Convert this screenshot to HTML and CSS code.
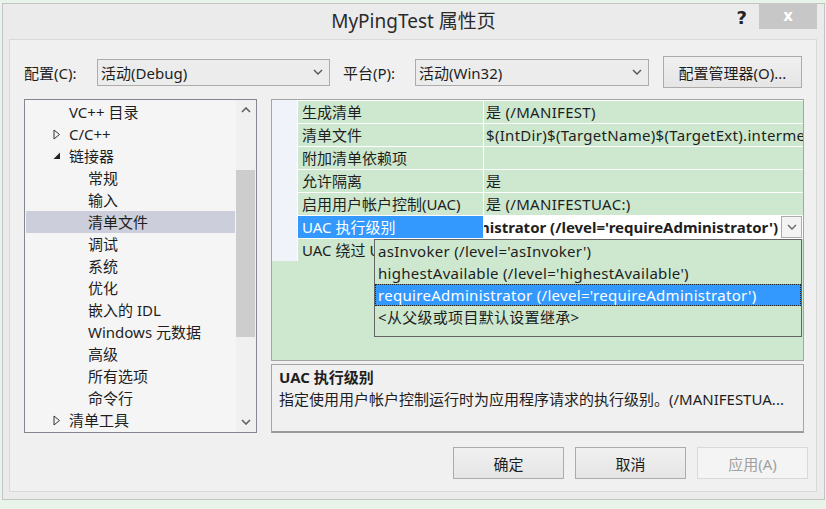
FILE: index.html
```html
<!DOCTYPE html>
<html>
<head>
    <meta charset="utf-8">
    <link rel="stylesheet" href="styles.css">
</head>
<body>
    <div class="window">
        <div class="titlebar">
            <div></div>
            <div class="caption">MyPingTest 属性页</div>
            <div class="caption-buttons">
                <span class="help">?</span>
                <span class="close">x</span>
            </div>
        </div>

        <div class="client">
            <div class="config-row">
                <span class="field-label">配置(C):</span>
                <div class="combo combo-config">
                    <span>活动(Debug)</span>
                    <svg class="chev" width="10" height="6" viewBox="0 0 10 6"><polyline points="1,1 5,5 9,1" fill="none" stroke="#555" stroke-width="1.4"/></svg>
                </div>
                <span class="field-label platform-label">平台(P):</span>
                <div class="combo combo-platform">
                    <span>活动(Win32)</span>
                    <svg class="chev" width="10" height="6" viewBox="0 0 10 6"><polyline points="1,1 5,5 9,1" fill="none" stroke="#555" stroke-width="1.4"/></svg>
                </div>
                <button class="btn btn-manager">配置管理器(O)...</button>
            </div>

            <div class="main">
                <div class="tree">
                    <ul class="tree-list">
                        <li class="node lvl1"><span class="twisty"></span>VC++ 目录</li>
                        <li class="node lvl1"><span class="twisty"><svg width="8" height="11" viewBox="0 0 8 11"><polygon points="1,1 6.5,5.5 1,10" fill="none" stroke="#333" stroke-width="1"/></svg></span>C/C++</li>
                        <li class="node lvl1"><span class="twisty"><svg width="8" height="8" viewBox="0 0 8 8"><polygon points="7,0.5 7,7 0.5,7" fill="#222"/></svg></span>链接器</li>
                        <li class="node lvl2">常规</li>
                        <li class="node lvl2">输入</li>
                        <li class="node lvl2 selected">清单文件</li>
                        <li class="node lvl2">调试</li>
                        <li class="node lvl2">系统</li>
                        <li class="node lvl2">优化</li>
                        <li class="node lvl2">嵌入的 IDL</li>
                        <li class="node lvl2">Windows 元数据</li>
                        <li class="node lvl2">高级</li>
                        <li class="node lvl2">所有选项</li>
                        <li class="node lvl2">命令行</li>
                        <li class="node lvl1"><span class="twisty"><svg width="8" height="11" viewBox="0 0 8 11"><polygon points="1,1 6.5,5.5 1,10" fill="none" stroke="#333" stroke-width="1"/></svg></span>清单工具</li>
                    </ul>
                    <div class="vscroll">
                        <div class="arrow">
                            <svg width="10" height="6" viewBox="0 0 10 6"><polyline points="1,5 5,1 9,5" fill="none" stroke="#606060" stroke-width="1.6"/></svg>
                        </div>
                        <div class="track"><div class="thumb"></div></div>
                        <div class="arrow">
                            <svg width="10" height="6" viewBox="0 0 10 6"><polyline points="1,1 5,5 9,1" fill="none" stroke="#606060" stroke-width="1.6"/></svg>
                        </div>
                    </div>
                </div>

                <div class="props">
                    <div class="grid">
                        <div class="gutter"></div>
                        <div class="table">
                            <div class="cell name">生成清单</div>
                            <div class="cell value">是 (/MANIFEST)</div>
                            <div class="cell name">清单文件</div>
                            <div class="cell value">$(IntDir)$(TargetName)$(TargetExt).intermediate.manifest</div>
                            <div class="cell name">附加清单依赖项</div>
                            <div class="cell value"></div>
                            <div class="cell name">允许隔离</div>
                            <div class="cell value">是</div>
                            <div class="cell name">启用用户帐户控制(UAC)</div>
                            <div class="cell value">是 (/MANIFESTUAC:)</div>
                            <div class="cell name active">UAC 执行级别</div>
                            <div class="cell value editing">
                                <div class="edit-text"><span>requireAdministrator (/level='requireAdministrator')</span></div>
                                <div class="drop-btn">
                                    <svg width="10" height="6" viewBox="0 0 10 6"><polyline points="1,1 5,5 9,1" fill="none" stroke="#666" stroke-width="1.4"/></svg>
                                </div>
                            </div>
                            <div class="cell name">UAC 绕过 UI 保护</div>
                            <div class="cell value"></div>
                        </div>

                        <ul class="dropdown">
                            <li>asInvoker (/level='asInvoker')</li>
                            <li>highestAvailable (/level='highestAvailable')</li>
                            <li class="picked">requireAdministrator (/level='requireAdministrator')</li>
                            <li>&lt;从父级或项目默认设置继承&gt;</li>
                        </ul>
                    </div>

                    <div class="desc">
                        <div class="desc-title">UAC 执行级别</div>
                        <div class="desc-text">指定使用用户帐户控制运行时为应用程序请求的执行级别。(/MANIFESTUA...</div>
                    </div>
                </div>
            </div>

            <div class="dialog-buttons">
                <button class="btn">确定</button>
                <button class="btn">取消</button>
                <button class="btn" disabled>应用(A)</button>
            </div>
        </div>
    </div>
</body>
</html>
```

FILE: styles.css
```css
* {
    box-sizing: border-box;
}

html,
body {
    margin: 0;
}

body {
    width: 826px;
    height: 509px;
    overflow: hidden;
    padding: 3px 0 0 2px;
    background-color: #e8f3ea;

    font-family: "Noto Sans", "Noto Sans CJK SC", sans-serif;
    font-size: 15px;
    color: #1e1e1e;
}

/* window frame */

.window {
    width: 823px;
    height: 497px;
    background-color: #ebebeb;
    border: 1px solid #c4c4c4;
    display: flex;
    flex-direction: column;
}

.titlebar {
    height: 35px;
    flex-shrink: 0;
    display: grid;
    grid-template-columns: 1fr auto 1fr;
}

.caption {
    font-size: 19px;
    line-height: 35px;
    color: #2b2b2b;
    white-space: nowrap;
}

.caption-buttons {
    display: flex;
    justify-content: flex-end;
    align-items: flex-start;
}

.help {
    font-family: "DejaVu Sans", sans-serif;
    font-weight: bold;
    font-size: 18px;
    line-height: 20px;
    margin-top: 4px;
    margin-right: 12px;
    color: #222;
}

.close {
    width: 58px;
    height: 26px;
    margin-top: -1px;
    margin-right: 7px;
    background-color: #c7c7c7;
    color: #fff;

    display: flex;
    justify-content: center;
    align-items: center;

    font-family: "DejaVu Sans", sans-serif;
    font-weight: bold;
    font-size: 15px;
}

.client {
    height: 453px;
    margin: 0 7px 0 6px;
    padding: 16px 8px 0 14px;
    background-color: #f0f0f0;
    border: 1px solid #d9d9d9;
}

/* configuration row */

.config-row {
    height: 32px;
    margin-right: 4px;
    display: flex;
    align-items: center;
}

.field-label {
    width: 73px;
    white-space: nowrap;
}

.platform-label {
    width: 72px;
    margin-left: 13px;
}

.combo {
    height: 27px;
    padding: 0 6px 0 3px;
    border: 1px solid #acacac;
    background-color: #ececec;

    display: flex;
    justify-content: space-between;
    align-items: center;
    white-space: nowrap;
}

.combo-config {
    width: 233px;
}

.combo-platform {
    width: 234px;
}

.btn {
    width: 111px;
    height: 32px;
    padding: 0;
    border: 1px solid #acacac;
    background: linear-gradient(#f0f0f0, #e5e5e5);

    font: inherit;
    color: #1e1e1e;
}

.btn:disabled {
    border-color: #d9d9d9;
    background: #f4f4f4;
    color: #a0a0a0;
}

.btn-manager {
    width: 139px;
    margin-left: 14px;
}

/* main area */

.main {
    margin: 11px 4px 0 0;
    display: flex;
    gap: 14px;
}

.tree {
    width: 233px;
    height: 334px;
    flex-shrink: 0;
    border: 1px solid #828790;
    background-color: #f5f5f5;
    display: flex;
}

.tree-list {
    flex: 1;
    margin: 0;
    padding: 1px 1px 0 1px;
    list-style: none;
}

.node {
    height: 22px;
    line-height: 22px;
    display: flex;
    align-items: center;
    white-space: nowrap;
}

.lvl1 {
    padding-left: 27px;
}

.lvl2 {
    padding-left: 62px;
}

.node.selected {
    background-color: #cccedb;
}

.twisty {
    width: 16px;
    height: 22px;
    display: flex;
    align-items: center;
}

.vscroll {
    width: 20px;
    background-color: #f0f0f0;
    display: flex;
    flex-direction: column;
}

.arrow {
    height: 20px;
    display: flex;
    justify-content: center;
    align-items: center;
}

.track {
    flex: 1;
}

.thumb {
    width: 19px;
    height: 167px;
    margin-top: 50px;
    background-color: #cdcdcd;
}

.props {
    flex: 1;
    display: flex;
    flex-direction: column;
    gap: 3px;
}

/* property grid */

.grid {
    position: relative;
    height: 262px;
    border: 1px solid #a5a5a5;
    background-color: #cde8cf;
    display: flex;
    align-items: flex-start;
}

.gutter {
    width: 25px;
    height: 161px;
    background-color: #f0f3fa;
}

.table {
    flex: 1;
    display: grid;
    grid-template-columns: 185px 1fr;
    gap: 1px;
    padding: 1px 0 0 1px;
    background-color: #fff;
    min-width: 0;
}

.cell {
    height: 22px;
    line-height: 22px;
    background-color: #cde8cf;
    overflow: hidden;
    white-space: nowrap;
}

.name {
    padding-left: 4px;
}

.value {
    padding-left: 2px;
    letter-spacing: 0.3px;
}

.name.active {
    background-color: #3399ff;
    color: #fff;
}

.value.editing {
    padding: 0;
    background-color: #fff;
    display: flex;
    letter-spacing: 0;
}

.edit-text {
    flex: 1;
    min-width: 0;
    overflow: hidden;
    display: flex;
    justify-content: flex-end;
    padding-right: 3px;
    font-weight: bold;
}

.edit-text span {
    flex-shrink: 0;
}

.drop-btn {
    width: 21px;
    height: 22px;
    margin-right: 1px;
    border: 1px solid #acacac;
    background-color: #f3f3f3;
    display: flex;
    justify-content: center;
    align-items: center;
}

.dropdown {
    position: absolute;
    left: 102px;
    top: 139px;
    width: 428px;
    height: 98px;
    margin: 0;
    padding: 0;
    list-style: none;
    border: 1px solid #646464;
    background-color: #cde8cf;
}

.dropdown li {
    height: 22px;
    line-height: 22px;
    padding-left: 3px;
    white-space: nowrap;
    letter-spacing: 0.3px;
}

.dropdown li.picked {
    background-color: #3399ff;
    color: #fff;
    outline: 1px dotted #222;
    outline-offset: -1px;
}

/* description */

.desc {
    height: 69px;
    padding: 1px 7px;
    border: 1px solid #a5a5a5;
    border-bottom: 2px solid #9a9a9a;
    background-color: #f0f0f0;
    white-space: nowrap;
}

.desc-title {
    line-height: 22px;
    font-weight: bold;
}

.desc-text {
    line-height: 22px;
}

/* bottom buttons */

.dialog-buttons {
    margin-top: 14px;
    display: flex;
    justify-content: flex-end;
    gap: 11px;
}
```
